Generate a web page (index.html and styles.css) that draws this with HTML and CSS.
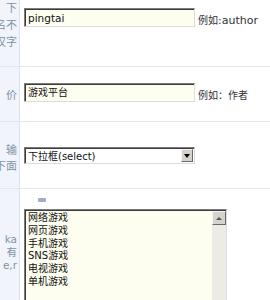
FILE: index.html
```html
<!DOCTYPE html>
<html>
<head>
<meta charset="utf-8">
<link rel="stylesheet" href="styles.css">
</head>
<body>
<div class="form">
  <div class="row r1">
    <div class="label l1"><span>下</span><span>名不</span><span>汉字</span></div>
    <div class="field f1">
      <div class="input">pingtai</div>
      <span class="hint"><span class="zh">例如</span>:author</span>
    </div>
  </div>
  <div class="row r2">
    <div class="label l2"><span>价</span></div>
    <div class="field f2">
      <div class="input cjk">游戏平台</div>
      <span class="hint"><span class="zh">例如：作者</span></span>
    </div>
  </div>
  <div class="row r3">
    <div class="label l3"><span>输</span><span>下面</span></div>
    <div class="field f3">
      <div class="select">
        <span class="sel-text"><span class="zh">下拉框</span>(select)</span>
        <span class="sel-btn"><span class="tri"></span></span>
      </div>
    </div>
  </div>
  <div class="row r4">
    <div class="label l4"><span>ka</span><span>有</span><span>e,r</span></div>
    <div class="field f4">
      <div class="mini"></div>
      <div class="textarea">
        <div class="ta-text">网络游戏<br>网页游戏<br>手机游戏<br>SNS游戏<br>电视游戏<br>单机游戏</div>
        <div class="scroll"><div class="up"><span class="utri"></span></div><div class="track"></div></div>
      </div>
    </div>
  </div>
</div>
</body>
</html>
```
FILE: styles.css
```css
html, body {
  margin: 0;
  padding: 0;
  background: #fff;
  overflow: hidden;
}
.form {
  width: 270px;
  font-family: "DejaVu Sans", "Noto Sans CJK SC", sans-serif;
  font-size: 11px;
  color: #222;
}
.zh {
  font-family: "Noto Sans CJK SC", sans-serif;
  font-size: 10px;
}
.row {
  display: flex;
  border-bottom: 1px solid #e3e8ee;
}
.r1 { height: 66px; }
.r2 { height: 54px; }
.r3 { height: 66px; }
.r4 { height: 120px; border-bottom: none; }
.label {
  flex: none;
  width: 20px;
  box-sizing: border-box;
  background: #f1f5fb;
  border-right: 1px solid #dbe3ee;
  overflow: hidden;
  display: flex;
  flex-direction: column;
  align-items: flex-end;
  padding-right: 2px;
  font-family: "Noto Sans CJK SC", sans-serif;
  font-size: 11px;
  line-height: 17px;
  color: #8193a8;
  white-space: nowrap;
}
.label span { display: block; }
.l1 { margin-top: -1px; }
.l2 { padding-top: 19px; }
.l3 { padding-top: 19px; line-height: 16px; }
.l4 { padding-top: 44px; line-height: 13px; font-family: "DejaVu Sans", "Noto Sans CJK SC", sans-serif; font-size: 10.5px; }
.field {
  flex: 1;
  padding-left: 4px;
}
.f1 { padding-top: 8px; display: flex; align-items: flex-start; }
.f2 { padding-top: 16px; display: flex; align-items: flex-start; }
.f3 { padding-top: 25px; }
.f4 { padding-top: 9px; }
.input {
  width: 171px;
  height: 19px;
  box-sizing: border-box;
  background: #fdfdf0;
  border: 1px solid;
  border-color: #7c7c7c #dcdcdc #dcdcdc #7c7c7c;
  box-shadow: inset 1px 1px 0 #3c3c3c;
  padding: 2px 0 0 3px;
  font-size: 10.5px;
  line-height: 14px;
  color: #111;
}
.input.cjk { font-family: "Noto Sans CJK SC", sans-serif; font-size: 10px; line-height: 14px; padding-top: 1px; }
.hint {
  margin-left: 3px;
  padding-top: 5px;
  font-size: 11px;
  line-height: 14px;
  color: #333;
}
.select {
  width: 171px;
  height: 17px;
  box-sizing: border-box;
  border: 1px solid;
  border-color: #7c7c7c #dcdcdc #dcdcdc #7c7c7c;
  box-shadow: inset 1px 1px 0 #3c3c3c;
  background: #fff;
  display: flex;
  align-items: center;
  justify-content: space-between;
}
.sel-text {
  padding-left: 3px;
  font-size: 10px;
  line-height: 13px;
  color: #111;
}
.sel-btn {
  width: 12px;
  height: 13px;
  margin-right: 1px;
  background: #d6d3cc;
  border: 1px solid;
  border-color: #f4f4f4 #6a6a6a #6a6a6a #f4f4f4;
  box-sizing: border-box;
  display: flex;
  align-items: center;
  justify-content: center;
}
.tri {
  width: 0;
  height: 0;
  border-left: 3px solid transparent;
  border-right: 3px solid transparent;
  border-top: 4px solid #000;
}
.mini {
  width: 8px;
  height: 4px;
  margin-left: 14px;
  background: #a3acc9;
  border-radius: 1px;
}
.textarea {
  margin-top: 7px;
  width: 203px;
  height: 100px;
  box-sizing: border-box;
  background: #fdfdf0;
  border: 1px solid;
  border-color: #7c7c7c #dcdcdc #dcdcdc #7c7c7c;
  box-shadow: inset 1px 1px 0 #3c3c3c;
  display: flex;
  justify-content: space-between;
}
.ta-text {
  padding: 2px 0 0 3px;
  font-family: "DejaVu Sans", "Noto Sans CJK SC", sans-serif;
  font-size: 10px;
  line-height: 12.8px;
  color: #111;
}
.scroll {
  width: 14px;
  margin-top: 1px;
  display: flex;
  flex-direction: column;
}
.up {
  height: 14px;
  box-sizing: border-box;
  background: #d6d3cc;
  border: 1px solid;
  border-color: #f4f4f4 #6a6a6a #6a6a6a #f4f4f4;
  display: flex;
  align-items: center;
  justify-content: center;
}
.utri {
  width: 0;
  height: 0;
  border-left: 3px solid transparent;
  border-right: 3px solid transparent;
  border-bottom: 3px solid #555;
}
.track {
  flex: 1;
  background: #ecebe6;
}
```
